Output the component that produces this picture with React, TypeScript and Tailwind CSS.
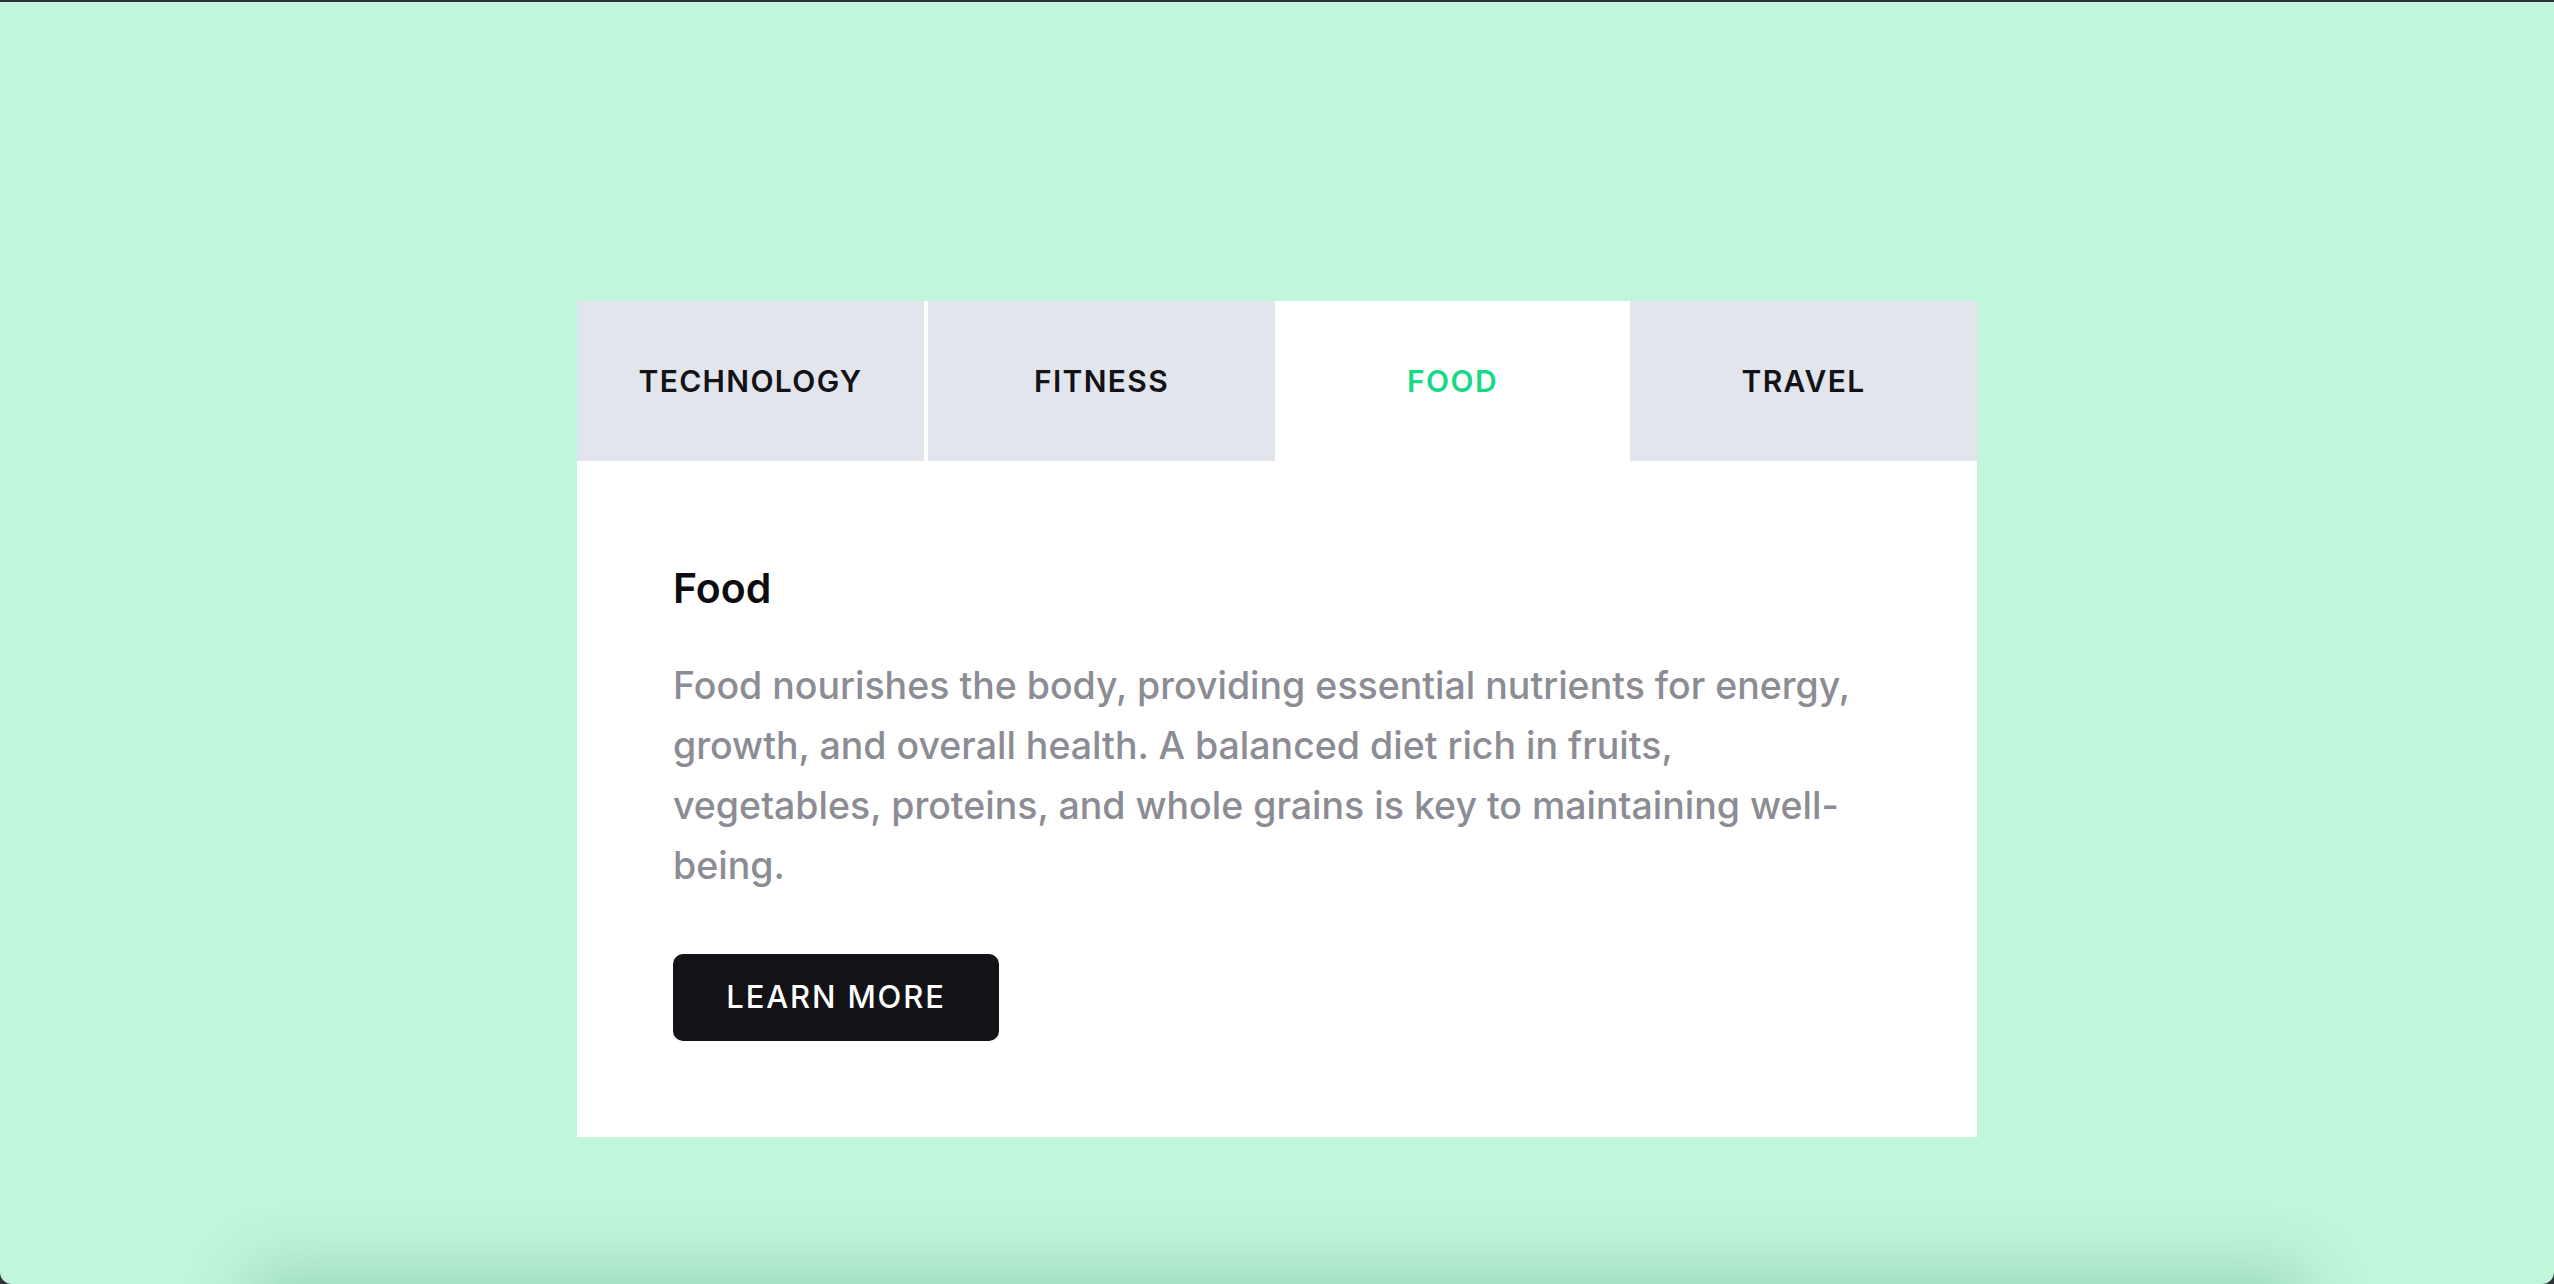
import React, { useState } from 'react';

const tabs = [
  {
    id: 'technology',
    label: 'Technology',
    title: 'Technology',
    text: 'Technology shapes the way we live, work and connect, turning bold ideas into everyday tools that make life simpler and more productive.',
  },
  {
    id: 'fitness',
    label: 'Fitness',
    title: 'Fitness',
    text: 'Fitness builds strength, endurance and confidence. Regular movement keeps the body healthy and the mind clear.',
  },
  {
    id: 'food',
    label: 'Food',
    title: 'Food',
    text: 'Food nourishes the body, providing essential nutrients for energy, growth, and overall health. A balanced diet rich in fruits, vegetables, proteins, and whole grains is key to maintaining well-being.',
  },
  {
    id: 'travel',
    label: 'Travel',
    title: 'Travel',
    text: 'Travel opens the door to new cultures, flavours and landscapes, and leaves us with stories worth telling.',
  },
];

export default function App() {
  const [active, setActive] = useState('food');
  const current = tabs.find((t) => t.id === active)!;

  return (
    <div className="min-h-screen bg-[#2f3438] pt-[2px]" style={{ fontFamily: 'Inter, "Noto Sans", sans-serif' }}>
      <div className="flex h-[1282px] flex-col items-center overflow-hidden rounded-b-[12px] bg-[#c1f5dc]">
        <section className="flex h-[1290px] w-full shrink-0 justify-center pt-[299px]">
          <div className="h-fit w-[1400px] bg-white">
            <div className="flex gap-[4px] bg-white">
              {tabs.map((tab) => (
                <button
                  key={tab.id}
                  onClick={() => setActive(tab.id)}
                  className={`flex h-[160px] flex-1 items-center justify-center text-[30px] font-semibold uppercase tracking-[0.045em] ${
                    tab.id === active ? 'bg-white text-[#17d987]' : 'bg-[#e2e5ec] text-[#121217]'
                  }`}
                >
                  {tab.label}
                </button>
              ))}
            </div>

            <div className="px-[96px] pt-[103px] pb-[96px]">
              <h2 className="text-[41px] font-semibold leading-[48px] text-[#0d0d10]">{current.title}</h2>
              <p className="mt-[44px] text-[37.5px] font-medium leading-[60px] text-[#8c8c94]">{current.text}</p>
              <button className="mt-[58px] flex h-[87px] w-[326px] items-center justify-center rounded-[10px] bg-[#121217] text-[31px] font-medium uppercase tracking-[0.06em] text-white">
                Learn more
              </button>
            </div>
          </div>
        </section>

        <div className="h-[200px] w-[2010px] shrink-0 bg-[#c1f5dc] shadow-[0_0_60px_20px_rgba(60,140,100,0.3)]"></div>
      </div>
    </div>
  );
}
